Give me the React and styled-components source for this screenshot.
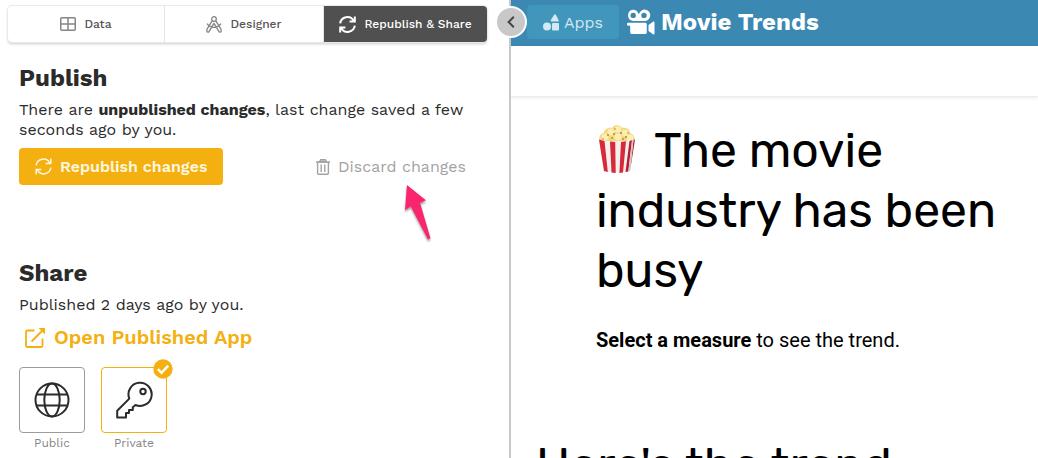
import React from "react";
import styled, { createGlobalStyle } from "styled-components";

const GlobalStyle = createGlobalStyle`
  * { box-sizing: border-box; }
  body {
    margin: 0;
    background: #fff;
    color: #2b2b2b;
    font-family: "Work Sans", Inter, "Liberation Sans", sans-serif;
  }
  h1, h2, p { margin: 0; }
  button { font: inherit; cursor: pointer; }
`;

const Page = styled.div`
  display: flex;
  height: 100vh;
  overflow: hidden;
`;

const SidePanel = styled.aside`
  position: relative;
  flex: none;
  width: calc(50% - 8px);
  padding: 6px 22px 0 8px;
  border-right: 2px solid #c8c8c8;
`;

const Tabs = styled.nav`
  display: grid;
  grid-template-columns: 157fr 159fr 163fr;
  height: 36px;
  border-radius: 4px;
  box-shadow: 0 0 0 1px #e9e9e9, 0 2px 3px rgba(0, 0, 0, 0.2);
`;

const Tab = styled.button`
  display: flex;
  align-items: center;
  justify-content: center;
  gap: 8px;
  padding: 0;
  border: 0;
  border-right: ${(p) => (p.$active ? "0" : "1px solid #e4e4e4")};
  border-radius: ${(p) => (p.$active ? "0 4px 4px 0" : "0")};
  background: ${(p) => (p.$active ? "#505050" : "transparent")};
  color: ${(p) => (p.$active ? "#fff" : "#555")};
  font-size: 12px;
  font-weight: 500;

  svg { color: ${(p) => (p.$active ? "#fff" : "#858585")}; }
`;

const CollapseButton = styled.button`
  position: absolute;
  top: 6px;
  right: -18px;
  z-index: 1;
  display: grid;
  place-items: center;
  width: 32px;
  height: 32px;
  padding: 0;
  border: 2px solid #fff;
  border-radius: 50%;
  background: #c8c8c8;
  color: #444;
`;

const Section = styled.section`
  margin-left: 11px;
  padding-top: ${(p) => p.$top}px;
`;

const SectionTitle = styled.h2`
  margin-bottom: 7px;
  font-size: 24px;
  font-weight: 700;
  line-height: 30px;
`;

const Text = styled.p`
  font-size: 16px;
  line-height: 20px;
`;

const Actions = styled.div`
  display: flex;
  align-items: center;
  justify-content: space-between;
  margin-top: 8px;
  padding-right: 5px;
`;

const ActionButton = styled.button`
  position: relative;
  display: flex;
  align-items: center;
  gap: 8px;
  height: 37px;
  padding: 0 16px;
  border: 0;
  border-radius: 4px;
  background: ${(p) => (p.$primary ? "#f3b010" : "transparent")};
  color: ${(p) => (p.$primary ? "#fff7df" : "#a3a3a3")};
  font-size: 16px;
  font-weight: ${(p) => (p.$primary ? 600 : 400)};
`;

const Pointer = styled.svg`
  position: absolute;
  top: 34px;
  left: 100px;
  filter: drop-shadow(0 2px 1px rgba(0, 0, 0, 0.4));
`;

const OpenLink = styled.a`
  display: flex;
  align-items: center;
  gap: 8px;
  margin: 9px 0 17px 6px;
  color: #f3b010;
  font-size: 20px;
  font-weight: 600;
  line-height: 26px;
  text-decoration: none;
`;

const Choices = styled.div`
  display: flex;
  gap: 16px;
`;

const Choice = styled.label`
  position: relative;
  display: flex;
  flex-direction: column;
  align-items: center;
  gap: 2px;
  width: 66px;
  color: #858585;
  font-size: 12px;
  line-height: 16px;
  cursor: pointer;
`;

const ChoiceInput = styled.input`
  position: absolute;
  inset: 0;
  width: 66px;
  height: 66px;
  margin: 0;
  opacity: 0;
`;

const ChoiceTile = styled.span`
  display: grid;
  place-items: center;
  width: 66px;
  height: 66px;
  border: 1px solid #9b9b9b;
  border-radius: 4px;
  color: #2b2b2b;

  input:checked + & { border-color: #f3b010; }
`;

const Badge = styled.svg`
  position: absolute;
  top: -8px;
  right: -6px;
`;

const Preview = styled.main`
  flex: 1;
  min-width: 0;
`;

const AppBar = styled.header`
  display: flex;
  align-items: center;
  gap: 8px;
  height: 46px;
  padding: 0 16px 2px;
  background: #3b88b3;
  color: #fff;
`;

const AppsButton = styled.button`
  display: flex;
  align-items: center;
  gap: 5px;
  height: 34px;
  padding: 0 16px;
  border: 0;
  border-radius: 4px;
  background: #4196bc;
  color: #d3e8f1;
  font-size: 16px;
`;

const AppTitle = styled.div`
  display: flex;
  align-items: center;
  gap: 6px;
  font-size: 24px;
  font-weight: 700;
`;

const SubBar = styled.div`
  height: 51px;
  border-bottom: 1px solid #ececec;
  box-shadow: 0 1px 3px rgba(0, 0, 0, 0.08);
`;

const Story = styled.article`
  padding: 24px 25px 0;
  color: #000;
  font-family: Rubik, Roboto, sans-serif;
`;

const Lead = styled.div`
  padding: 0 0 0 60px;
`;

const Headline = styled.h1`
  font-family: Rubik, Inter, sans-serif;
  font-size: 48px;
  font-weight: 400;
  line-height: 60px;

  svg { margin-right: 16px; vertical-align: -6px; }
`;

const Hint = styled.p`
  margin: 27px 0 84px;
  font-family: Roboto, sans-serif;
  font-size: 20px;
  line-height: 24px;
`;

const SyncIcon = ({ size = 17, weight = 1.5 }) => (
  <svg width={size} height={size} viewBox="0 0 17 17" fill="none" stroke="currentColor" strokeWidth={weight} aria-hidden="true">
    <path d="M1.2 7.3A7.2 7.2 0 0 1 14.6 4.8M15.8 9.7A7.2 7.2 0 0 1 2.4 12.2M15.8 .6v5H10.6M1.2 16.4v-5h5.2" />
  </svg>
);

const TableIcon = () => (
  <svg width="16" height="14" viewBox="0 0 16 14" fill="none" stroke="currentColor" strokeWidth="1.5" aria-hidden="true">
    <rect x=".75" y=".75" width="14.5" height="12.5" rx="1" />
    <path d="M8 .75v12.5M.75 7h14.5" />
  </svg>
);

const CompassIcon = () => (
  <svg width="16" height="17" viewBox="0 0 16 17" fill="none" stroke="currentColor" strokeWidth="1.3" strokeLinejoin="round" aria-hidden="true">
    <circle cx="8" cy="3" r="2.300" />
    <path d="M6.300 4.600.9 13.300v2.500l1.800.3L8 7.300l5.300 8.800 1.800-.3v-2.500L9.700 4.600M1 7.600c3.600 5 10.400 5 14 0" />
  </svg>
);

const ChevronIcon = () => (
  <svg width="8" height="12" viewBox="0 0 8 12" fill="none" stroke="currentColor" strokeWidth="2" aria-hidden="true">
    <path d="M6.800.8 1.600 6l5.200 5.200" />
  </svg>
);

const TrashIcon = () => (
  <svg width="14" height="16" viewBox="0 0 14 16" fill="none" stroke="currentColor" strokeWidth="1.400" aria-hidden="true">
    <path d="M0 3h14M1.600 3v11.200c0 .6.400 1 1 1h8.800c.6 0 1-.4 1-1V3M5.200 5.500v7.400M8.800 5.500v7.400" />
    <path d="M3.400 3 4.600.8h4.800L10.600 3z" fill="currentColor" fillOpacity=".5" />
  </svg>
);

const OpenIcon = () => (
  <svg width="21" height="21" viewBox="0 0 21 21" fill="none" stroke="currentColor" strokeWidth="1.800" aria-hidden="true">
    <path d="M9.500 3.500H2.200a1.200 1.200 0 0 0-1.200 1.200v14.100A1.200 1.200 0 0 0 2.200 20h14.100a1.200 1.200 0 0 0 1.200-1.200V11.500M6.500 14.500 18 3" />
    <path d="M13.500 1H20v6.500z" fill="currentColor" stroke="none" />
  </svg>
);

const GlobeIcon = () => (
  <svg width="36" height="36" viewBox="0 0 36 36" fill="none" stroke="currentColor" strokeWidth="2" aria-hidden="true">
    <circle cx="18" cy="18" r="16.500" />
    <ellipse cx="18" cy="18" rx="7.700" ry="16.500" />
    <path d="M2.500 12.500h31M2.500 23.500h31" />
  </svg>
);

const KeyIcon = () => (
  <svg width="38" height="38" viewBox="0 0 38 38" fill="none" stroke="currentColor" strokeWidth="2" strokeLinejoin="round" aria-hidden="true">
    <path d="M14.300 17.600A11.600 11.600 0 1 1 20.500 24L17.800 26.200V29H14v3h-3v4.500H2.200v-6.700z" />
    <circle cx="28" cy="10.500" r="2.700" />
  </svg>
);

const ShapesIcon = () => (
  <svg width="16" height="17" viewBox="0 0 16 17" fill="currentColor" aria-hidden="true">
    <path d="M12 0c.5 0 3.500 5.500 3.700 6.200.2.600-.1 1.300-.8 1.300H8.600c-.7 0-1-.6-.8-1.200C8 5.600 11.500 0 12 0z" />
    <circle cx="4" cy="12.500" r="4" />
    <rect x="9" y="9" width="7" height="7.500" rx="1" />
  </svg>
);

const CameraIcon = () => (
  <svg width="28" height="26" viewBox="0 0 28 26" fill="currentColor" aria-hidden="true">
    <path fillRule="evenodd" d="M6 .7a5.700 5.700 0 0 1 5.400 4h.7A5.700 5.700 0 1 1 17.200 12H6A5.700 5.700 0 0 1 6 .7zM6.200 3.700a2.700 2.700 0 1 0 0 5.400 2.700 2.700 0 0 0 0-5.400zm10.800 0a2.700 2.700 0 1 0 0 5.400 2.700 2.700 0 0 0 0-5.400z" />
    <path d="M1.200 13.700H18c1 0 1.800.7 1.800 1.700v7.900c0 1-.8 1.800-1.800 1.800H5c-1 0-1.800-.8-1.800-1.800v-6.600h-2A1.300 1.300 0 0 1 0 15.200c0-.8.500-1.500 1.200-1.500zM26 12.700c.7-.4 1.500 0 1.500.8v11c0 .8-.8 1.200-1.500.8L21.500 22v-6z" />
  </svg>
);

const PopcornIcon = () => (
  <svg width="42" height="48" viewBox="0 0 42 48" role="img" aria-label="Popcorn">
    <path d="M4 16C2 12 5 8 8 8c0-4 5-6 8-5 3-4 9-3 10 0 5-1 8 2 8 5 4 1 6 6 4 9z" fill="#f1d878" />
    <g fill="#fbeeb4">
      <circle cx="9" cy="12" r="3.500" />
      <circle cx="15" cy="7" r="3.500" />
      <circle cx="22" cy="4.500" r="3.300" />
      <circle cx="29" cy="8" r="3.500" />
      <circle cx="34" cy="13" r="3.500" />
      <circle cx="22" cy="12" r="3.600" />
    </g>
    <g fill="#bd842d">
      <circle cx="12" cy="10" r="1" />
      <circle cx="18" cy="9" r="1" />
      <circle cx="19" cy="4" r=".8" />
      <circle cx="25" cy="8" r="1" />
      <circle cx="30" cy="12" r="1" />
      <circle cx="16" cy="13" r=".9" />
      <circle cx="27" cy="14" r=".9" />
      <circle cx="32" cy="8" r=".8" />
      <circle cx="7" cy="14" r=".8" />
    </g>
    <path d="M3 14.500q18 4 36 0L34 46q-13 3-26 0z" fill="#f5efed" />
    <path d="M3 14.500 8.500 16l3.300 31L8 46zM14 16.500l5.200.5.500 31-4.200-.6zM25 17l5-.7-3 31.300-3.600.4z" fill="#d7293a" />
    <path d="M33.500 16 36 15.200 32.300 46.500l-2.800.6zM37.500 14.800 39 14.500 34 46z" fill="#b51f31" />
    <path d="m36 15.200 1.500-.4L34 46l-1.700.5z" fill="#d4c4c3" />
  </svg>
);

const CheckBadge = () => (
  <Badge width="20" height="20" viewBox="0 0 20 20" aria-hidden="true">
    <circle cx="10" cy="10" r="9.700" fill="#f3b010" />
    <path d="m4.800 10.200 3.700 3.600 6.800-7.100" fill="none" stroke="#fff" strokeWidth="2.500" />
  </Badge>
);

const visibilities = [
  { value: "public", label: "Public", Icon: GlobeIcon },
  { value: "private", label: "Private", Icon: KeyIcon },
];

export default function App() {
  const [visibility, setVisibility] = React.useState("private");
  return (
    <>
      <GlobalStyle />
      <Page>
        <SidePanel>
          <Tabs>
            <Tab type="button"><TableIcon />Data</Tab>
            <Tab type="button"><CompassIcon />Designer</Tab>
            <Tab type="button" $active><SyncIcon weight={2} />Republish &amp; Share</Tab>
          </Tabs>
          <CollapseButton type="button" aria-label="Collapse panel"><ChevronIcon /></CollapseButton>

          <Section $top={21}>
            <SectionTitle>Publish</SectionTitle>
            <Text>
              There are <b>unpublished changes</b>, last change saved a few seconds ago by you.
            </Text>
            <Actions>
              <ActionButton type="button" $primary><SyncIcon />Republish changes</ActionButton>
              <ActionButton type="button">
                <TrashIcon />Discard changes
                <Pointer width="34" height="60" viewBox="0 0 34 60" aria-hidden="true">
                  <path d="M7 3 26 18.300l-6 2.400 10.300 35q-.9 2-2.600 1.300L10.700 24.300 5 28.300z" fill="#fb246f" />
                </Pointer>
              </ActionButton>
            </Actions>
          </Section>

          <Section $top={73}>
            <SectionTitle>Share</SectionTitle>
            <Text>Published 2 days ago by you.</Text>
            <OpenLink href="#app"><OpenIcon />Open Published App</OpenLink>
            <Choices role="radiogroup" aria-label="Visibility">
              {visibilities.map(({ value, label, Icon }) => (
                <Choice key={value}>
                  <ChoiceInput
                    type="radio"
                    name="visibility"
                    value={value}
                    checked={visibility === value}
                    onChange={() => setVisibility(value)}
                  />
                  <ChoiceTile><Icon /></ChoiceTile>
                  {label}
                  {visibility === value && <CheckBadge />}
                </Choice>
              ))}
            </Choices>
          </Section>
        </SidePanel>

        <Preview>
          <AppBar>
            <AppsButton type="button"><ShapesIcon />Apps</AppsButton>
            <AppTitle><CameraIcon />Movie Trends</AppTitle>
          </AppBar>
          <SubBar />
          <Story>
            <Lead>
              <Headline><PopcornIcon />The movie industry has been busy</Headline>
              <Hint><b>Select a measure</b> to see the trend.</Hint>
            </Lead>
            <Headline as="h2">Here's the trend</Headline>
          </Story>
        </Preview>
      </Page>
    </>
  );
}
